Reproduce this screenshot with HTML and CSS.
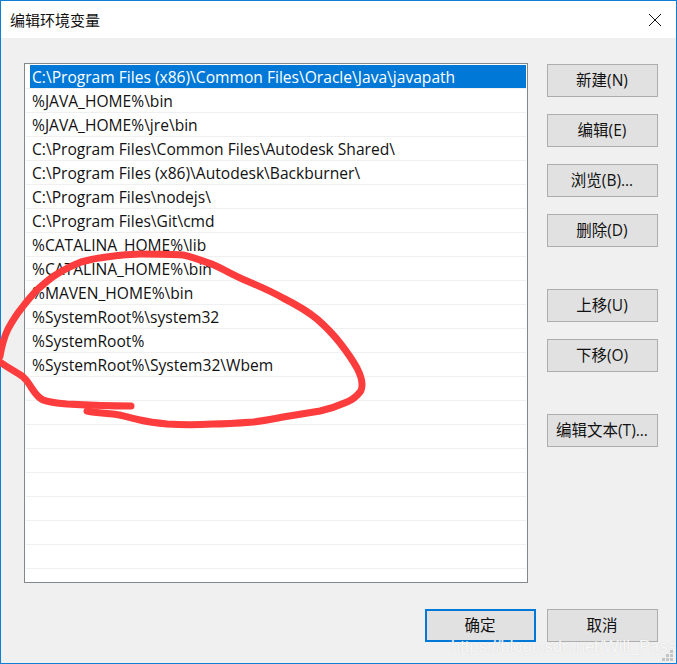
FILE: index.html
```html
<!DOCTYPE html>
<html lang="zh-CN">
<head>
<meta charset="utf-8">
<title>编辑环境变量</title>
<link rel="stylesheet" href="styles.css">
</head>
<body>
<div class="window">
  <header class="titlebar">
    <span class="title">编辑环境变量</span>
    <svg class="close" viewBox="0 0 12 12" width="12" height="12"><path d="M0 0l12 12M12 0L0 12"/></svg>
  </header>
  <main class="content">
    <ul class="list">
      <li class="row selected"><span>C:\Program Files (x86)\Common Files\Oracle\Java\javapath</span></li>
      <li class="row"><span>%JAVA_HOME%\bin</span></li>
      <li class="row"><span>%JAVA_HOME%\jre\bin</span></li>
      <li class="row"><span>C:\Program Files\Common Files\Autodesk Shared\</span></li>
      <li class="row"><span>C:\Program Files (x86)\Autodesk\Backburner\</span></li>
      <li class="row"><span>C:\Program Files\nodejs\</span></li>
      <li class="row"><span>C:\Program Files\Git\cmd</span></li>
      <li class="row"><span>%CATALINA_HOME%\lib</span></li>
      <li class="row"><span>%CATALINA_HOME%\bin</span></li>
      <li class="row"><span>%MAVEN_HOME%\bin</span></li>
      <li class="row"><span>%SystemRoot%\system32</span></li>
      <li class="row"><span>%SystemRoot%</span></li>
      <li class="row"><span>%SystemRoot%\System32\Wbem</span></li>
      <li class="row"></li><li class="row"></li><li class="row"></li><li class="row"></li>
      <li class="row"></li><li class="row"></li><li class="row"></li><li class="row"></li>
    </ul>
    <div class="actions">
      <button class="btn">新建(N)</button>
      <button class="btn">编辑(E)</button>
      <button class="btn">浏览(B)...</button>
      <button class="btn">删除(D)</button>
      <button class="btn group">上移(U)</button>
      <button class="btn">下移(O)</button>
      <button class="btn group">编辑文本(T)...</button>
    </div>
  </main>
  <footer class="footer">
    <button class="btn default">确定</button>
    <button class="btn">取消</button>
  </footer>
  <svg class="scribble" viewBox="0 0 677 664" width="677" height="664">
    <path d="M131 406C110 406 85 405 67 404C55 403 48 402 43 400C37 397 35 393 31 387C28 382 26 379 22 376C16 372 10 369 0 362"/>
    <path d="M0 356C2 345 4 337 8 329C13 320 16 315 21 309C27 301 32 295 38 289C44 284 48 280 54 276C63 270 71 266 81 262C92 259 103 257 114 256C124 255 132 254 141 254C155 254 170 254 183 255C193 257 203 261 214 265C225 270 235 276 247 281C259 286 271 291 283 298C295 304 306 310 317 319C325 326 333 334 340 343C347 352 352 359 357 368C360 374 362 379 362 384C362 388 362 390 360 392C356 397 352 400 347 402C338 406 329 409 320 411C308 413 296 415 283 417C273 419 263 421 253 422C240 423 227 424 213 424C197 425 182 425 167 424C157 423 149 422 140 420C131 418 122 415 113 414C104 413 96 413 87 411"/>
  </svg>
  <span class="watermark">https://blog.csdn.net/Will_Pass</span>
  <svg class="grip" viewBox="0 0 12 12" width="12" height="12"><path d="M8 0h3v3H8zM4 4h3v3H4zM8 4h3v3H8zM0 8h3v3H0zM4 8h3v3H4zM8 8h3v3H8z"/></svg>
</div>
</body>
</html>
```
FILE: styles.css
```css
* { box-sizing: border-box; }
html, body { margin: 0; padding: 0; }
body { width: 677px; height: 664px; overflow: hidden; font-family: "Open Sans", "Noto Sans CJK SC", sans-serif; font-size: 15px; color: #000; }
.window { position: relative; width: 677px; height: 664px; border: 1px solid #0f7fd6; background: #f0f0f0; display: flex; flex-direction: column; }
.titlebar { height: 37px; flex: none; background: #fff; display: flex; align-items: center; justify-content: space-between; padding: 0 15px 0 9px; }
.title { font-size: 15px; color: #111; font-family: "Noto Sans CJK SC", sans-serif; }
.close { fill: none; stroke: #111; stroke-width: 1; }
.content { display: flex; align-items: flex-start; gap: 19px; padding: 25px 0 0 23px; }
.list { width: 504px; height: 520px; margin: 0; padding: 1px 1px 0 1px; list-style: none; background: #fff; border: 1px solid #82878c; overflow: hidden; }
.row { height: 24px; border-bottom: 1px solid #f0f0f0; padding-left: 4px; }
.row span { display: block; height: 23px; line-height: 25px; padding-left: 2px; font-size: 15.6px; white-space: nowrap; color: #111; }
.row.selected span { background: #0078d7; color: #fff; }
.actions { display: flex; flex-direction: column; gap: 17px; margin-top: 1px; }
.btn { width: 111px; height: 33px; padding: 0 1px 2px 0; background: #e1e1e1; border: 1px solid #adadad; font: inherit; font-size: 15.5px; color: #111; }
.btn.group { margin-top: 25px; }
.btn.default { border: 2px solid #0078d7; }
.footer { display: flex; justify-content: flex-end; gap: 11px; padding-right: 18px; margin-top: 26px; }
.scribble { position: absolute; left: -1px; top: -1px; pointer-events: none; fill: none; stroke: #fd3d3d; stroke-width: 7; stroke-linecap: round; stroke-linejoin: round; }
.watermark { position: absolute; left: 450px; top: 636px; font: 16.5px/18px "Liberation Sans", sans-serif; color: rgba(255,255,255,.85); text-shadow: 0 0 1px rgba(190,190,190,.7); white-space: nowrap; }
.grip { position: absolute; right: 2px; bottom: 1px; fill: #c4c4c4; }
```
